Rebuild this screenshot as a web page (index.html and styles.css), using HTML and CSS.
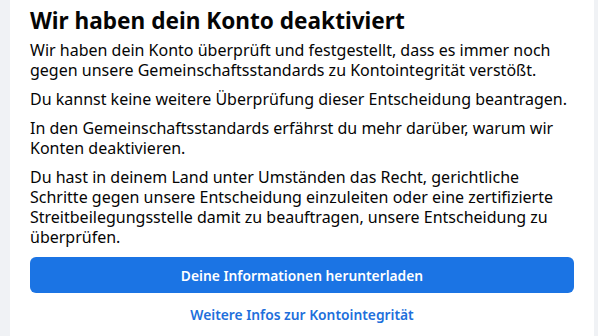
FILE: index.html
```html
<!DOCTYPE html>
<html lang="de">
<head>
  <meta charset="UTF-8">
  <meta name="viewport" content="width=device-width, initial-scale=1.0">
  <title>Konto deaktiviert</title>
  <link rel="stylesheet" href="styles.css">
</head>
<body>
  <div class="card">
    <h1 class="title">Wir haben dein Konto deaktiviert</h1>
    <p class="text">Wir haben dein Konto überprüft und festgestellt, dass es immer noch gegen unsere Gemeinschaftsstandards zu Kontointegrität verstößt.</p>
    <p class="text">Du kannst keine weitere Überprüfung dieser Entscheidung beantragen.</p>
    <p class="text">In den Gemeinschaftsstandards erfährst du mehr darüber, warum wir Konten deaktivieren.</p>
    <p class="text">Du hast in deinem Land unter Umständen das Recht, gerichtliche Schritte gegen unsere Entscheidung einzuleiten oder eine zertifizierte Streitbeilegungsstelle damit zu beauftragen, unsere Entscheidung zu überprüfen.</p>
    <button class="btn-primary">Deine Informationen herunterladen</button>
    <a class="link" href="#">Weitere Infos zur Kontointegrität</a>
  </div>
</body>
</html>
```

FILE: styles.css
```css
* {
  margin: 0;
  padding: 0;
  box-sizing: border-box;
}

body {
  background: #f0f2f5;
  font-family: 'Noto Sans', Arial, sans-serif;
  color: #050505;
  padding: 0 4px 0 10px;
}

.card {
  background: #fff;
  min-height: 336px;
  padding: 6px 20px 0 20px;
  display: flex;
  flex-direction: column;
}

.title {
  font-size: 22.6px;
  font-weight: 700;
  line-height: 30px;
  margin-bottom: 4px;
}

.text {
  font-size: 16px;
  line-height: 20px;
  margin-bottom: 9px;
}

.btn-primary {
  margin-top: 1px;
  height: 36px;
  border: none;
  border-radius: 6px;
  background: #1b74e4;
  color: #fff;
  font-family: inherit;
  font-size: 13.8px;
  font-weight: 600;
  cursor: pointer;
}

.link {
  margin-top: 12px;
  text-align: center;
  color: #216fdb;
  font-size: 13.8px;
  font-weight: 600;
  text-decoration: none;
}
```
